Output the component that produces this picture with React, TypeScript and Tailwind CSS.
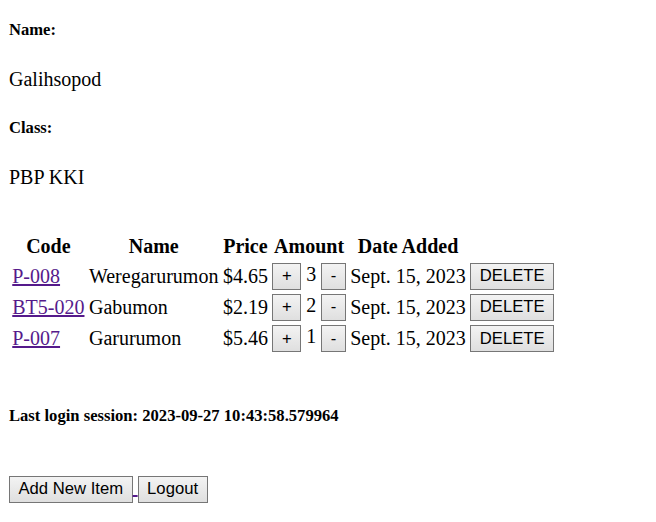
import React from "react";

const btn =
  "border border-[#767676] bg-linear-to-b from-[#f3f3f3] to-[#dfdfdf] px-[8.5px] py-[2.4px] font-['Liberation_Sans',Arial,sans-serif] text-[16.67px] leading-[normal] text-black align-baseline";

const rows = [
  { code: "P-008", name: "Weregarurumon", price: "$4.65", amount: 3 },
  { code: "BT5-020", name: "Gabumon", price: "$2.19", amount: 2 },
  { code: "P-007", name: "Garurumon", price: "$5.46", amount: 1 },
];

export default function App() {
  return (
    <div className="min-h-screen bg-white pl-[9px] pr-[9px] pt-[20px] font-['Liberation_Serif','Times_New_Roman',serif] text-[20px] leading-[normal] text-black">
      <h5 className="mb-[27.7px] text-[16.6px] font-bold">Name:</h5>
      <p className="mb-[27.7px]">Galihsopod</p>
      <h5 className="mb-[27.7px] text-[16.6px] font-bold">Class:</h5>
      <p>PBP KKI</p>

      <table className="mt-[43px] border-separate border-spacing-[2.5px]">
        <thead>
          <tr>
            <th className="p-[1.25px] text-center font-bold">Code</th>
            <th className="p-[1.25px] text-center font-bold">Name</th>
            <th className="p-[1.25px] text-center font-bold">Price</th>
            <th className="p-[1.25px] text-center font-bold">Amount</th>
            <th className="p-[1.25px] text-center font-bold">Date Added</th>
            <th className="p-[1.25px]"></th>
          </tr>
        </thead>
        <tbody>
          {rows.map((r) => (
            <tr key={r.code}>
              <td className="whitespace-nowrap p-[1.25px] align-middle">
                <a href="#" className="text-[#551a8b] underline">
                  {r.code}
                </a>
              </td>
              <td className="whitespace-nowrap p-[1.25px] align-middle">{r.name}</td>
              <td className="whitespace-nowrap p-[1.25px] align-middle">{r.price}</td>
              <td className="whitespace-nowrap p-[1.25px] align-middle">
                <button className={btn}>+</button> {r.amount}{" "}
                <button className={btn}>-</button>
              </td>
              <td className="whitespace-nowrap p-[1.25px] align-middle">Sept. 15, 2023</td>
              <td className="whitespace-nowrap p-[1.25px] align-middle">
                <button className={btn}>DELETE</button>
              </td>
            </tr>
          ))}
        </tbody>
      </table>

      <h5 className="mt-[50.8px] text-[16.6px] font-bold">
        Last login session: 2023-09-27 10:43:58.579964
      </h5>

      <div className="mt-[49.7px] whitespace-nowrap">
        <a href="#" className="text-[#551a8b] underline">
          <button className={btn}>Add New Item</button>{" "}
        </a>
        <a href="#" className="text-[#551a8b] underline">
          <button className={btn}>Logout</button>
        </a>
      </div>
    </div>
  );
}
